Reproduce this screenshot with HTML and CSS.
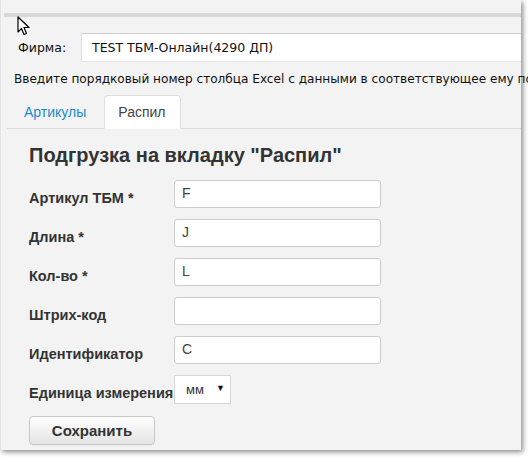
FILE: index.html
```html
<!DOCTYPE html>
<html>
<head>
<meta charset="utf-8">
<link rel="stylesheet" href="styles.css">
</head>
<body>
<div class="window">
  <div class="topbar"></div>
  <div class="firm-row">
    <span class="firm-label">Фирма:</span>
    <div class="firm-input">TEST ТБМ-Онлайн(4290 ДП)</div>
  </div>
  <div class="hint">Введите порядковый номер столбца Excel с данными в соответствующее ему поле</div>
  <ul class="tabs">
    <li class="tab"><a class="tab-link">Артикулы</a></li>
    <li class="tab active"><a class="tab-link">Распил</a></li>
  </ul>
  <div class="content">
    <h2 class="title">Подгрузка на вкладку "Распил"</h2>
    <div class="form">
      <div class="row"><label class="lbl">Артикул ТБМ *</label><div class="field">F</div></div>
      <div class="row"><label class="lbl">Длина *</label><div class="field">J</div></div>
      <div class="row"><label class="lbl">Кол-во *</label><div class="field">L</div></div>
      <div class="row"><label class="lbl">Штрих-код</label><div class="field"></div></div>
      <div class="row"><label class="lbl">Идентификатор</label><div class="field">C</div></div>
      <div class="row"><label class="lbl">Единица измерения</label><div class="select"><span class="sel-val">мм</span><span class="sel-arrow">▼</span></div></div>
    </div>
    <button class="btn">Сохранить</button>
  </div>
  <svg class="cursor" width="13" height="20" viewBox="0 0 13 20"><path d="M1 1 L1 16 L4.5 12.5 L7 18.5 L9.5 17.5 L7 11.5 L12 11.5 Z" fill="#fff" stroke="#000" stroke-width="1.2" stroke-linejoin="round"/></svg>
</div>
</body>
</html>
```
FILE: styles.css
```css
html, body { margin: 0; padding: 0; background: #fff; }
body { width: 528px; height: 457px; overflow: hidden; }
.window {
  position: relative;
  width: 521px;
  height: 450px;
  background: #f3f3f3;
  box-shadow: 2px 2px 5px rgba(0,0,0,0.45);
  box-sizing: border-box;
  border-left: 1px solid #e4e4e4;
  padding-top: 13px;
}
.topbar { height: 4px; margin-left: 3px; background: #d9d9d9; }
.firm-row { display: flex; align-items: center; margin-top: 16px; height: 29px; }
.firm-label { font-family: "DejaVu Sans", sans-serif; font-size: 12.5px; color: #111; margin-left: 17px; width: 63px; }
.firm-input {
  width: 440px; height: 29px; box-sizing: border-box; background: #fff;
  border-top: 1px solid #cfcfcf; border-left: 1px solid #dcdcdc; border-bottom: 1px solid #e6e6e6;
  font-family: "DejaVu Sans", sans-serif; font-size: 12.5px; color: #111;
  padding-left: 10px; line-height: 27px; white-space: nowrap;
}
.hint {
  margin-top: 8px; margin-left: 13px; width: 515px; overflow: hidden; height: 18px; line-height: 18px;
  font-family: "DejaVu Sans", sans-serif; font-size: 12.1px; color: #111; white-space: nowrap;
}
.tabs {
  list-style: none; margin: 7px 0 0 6px; padding: 0; display: flex; gap: 3px;
  border-bottom: 1px solid #dcdcdc; height: 33px;
}
.tab { height: 33px; margin-bottom: -1px; }
.tab-link {
  display: block; box-sizing: border-box; height: 33px; padding: 0 14px 0 16px; line-height: 33px;
  font-family: "Liberation Sans", Arial, sans-serif; font-size: 14px; color: #1c8ac9;
  border: 1px solid transparent; border-radius: 4px 4px 0 0;
}
.tab.active .tab-link { background: #fff; color: #444; border-color: #dedede; border-bottom-color: #fff; height: 34px; padding: 0 14px 0 13px; }
.content { padding-left: 28px; }
.title {
  margin: 15px 0 0; font-family: "Liberation Sans", Arial, sans-serif; font-size: 20px;
  font-weight: bold; color: #333; line-height: 23px;
}
.form { display: flex; flex-direction: column; gap: 11px; margin-top: 13px; }
.row { display: flex; align-items: center; }
.lbl {
  width: 145px; font-family: "Liberation Sans", Arial, sans-serif; font-size: 14.5px;
  font-weight: bold; color: #333; padding-top: 7px; white-space: nowrap;
}
.field {
  width: 207px; height: 28px; box-sizing: border-box; background: #fff;
  border: 1px solid #cdcdcd; border-radius: 3px; padding-left: 7px;
  font-family: "Liberation Sans", Arial, sans-serif; font-size: 14px; color: #444; line-height: 24px;
}
.select {
  position: relative; width: 57px; height: 29px; box-sizing: border-box; background: #fff;
  border: 1px solid #d6d6d6;
  font-family: "Liberation Sans", Arial, sans-serif; font-size: 13px; color: #333;
}
.sel-val { position: absolute; left: 11px; top: 6px; }
.sel-arrow { position: absolute; left: 41px; top: 7px; font-size: 9px; color: #111; }
.btn {
  margin-top: 12px; width: 126px; height: 29px; box-sizing: border-box;
  border: 1px solid #c8c8c8; border-radius: 4px;
  background: linear-gradient(#ffffff, #e4e4e4);
  font-family: "Liberation Sans", Arial, sans-serif; font-size: 15px; font-weight: bold; color: #333;
  padding: 0; box-shadow: 0 1px 1px rgba(0,0,0,0.05);
}
.cursor { position: absolute; left: 16px; top: 16px; }
```
